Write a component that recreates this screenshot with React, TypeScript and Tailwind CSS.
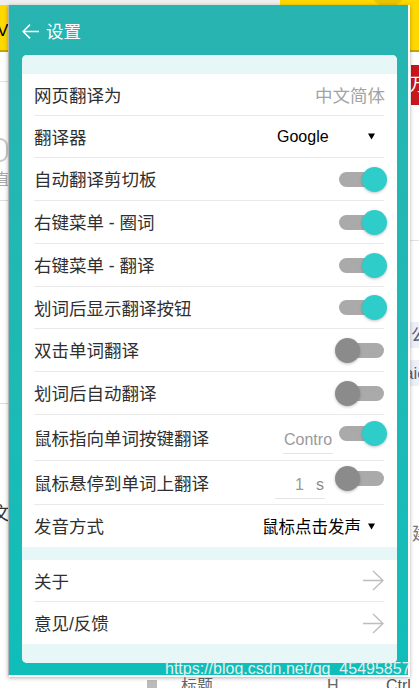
import React from "react";

const FONT = '"Liberation Sans", "Noto Sans CJK SC", sans-serif';

function Toggle({ on, className = "" }: { on: boolean; className?: string }) {
  return (
    <div className={`relative w-[52px] h-[25px] shrink-0 mr-[-3px] ${className}`}>
      <div className="absolute left-[4px] right-[3px] top-[5px] h-[15px] rounded-full bg-[#aaaaaa]" />
      {on ? (
        <div className="absolute right-0 top-0 w-[25px] h-[25px] rounded-full bg-[#2fcdc9] shadow-[0_1px_3px_rgba(0,0,0,0.25)]" />
      ) : (
        <div className="absolute left-0 top-0 w-[25px] h-[25px] rounded-full bg-[#8b8b8b] shadow-[0_1px_3px_rgba(0,0,0,0.25)]" />
      )}
    </div>
  );
}

function Row({
  label,
  h,
  border = true,
  children,
}: {
  label: string;
  h: string;
  border?: boolean;
  children?: React.ReactNode;
}) {
  return (
    <div
      className={`flex items-center justify-between ml-[12px] mr-[13px] ${h} ${
        border ? "border-b border-[#e9e9e9]" : ""
      }`}
    >
      <span className="mt-[4px] text-[17.5px] leading-none text-[#2f2f2f] whitespace-nowrap">{label}</span>
      <div className="flex items-center">{children}</div>
    </div>
  );
}

function Caret() {
  return (
    <svg width="7" height="7" viewBox="0 0 7 7" className="block">
      <polygon points="0,0.5 7,0.5 3.5,6.5" fill="#000" />
    </svg>
  );
}

function RightArrow() {
  return (
    <svg width="21" height="21" viewBox="0 0 21 21" className="block" fill="none">
      <path d="M0 10.5 H20 M10 1 L20 10.5 L10 20" stroke="#bdbdbd" strokeWidth="1.4" />
    </svg>
  );
}

export default function App() {
  return (
    <div
      className="relative w-[419px] h-[688px] overflow-hidden bg-white"
      style={{ fontFamily: FONT }}
    >
      {/* background page */}
      <div className="relative h-[52px] bg-[#ffd800] border-b-2 border-[#c9a400]">
        <div className="absolute left-0 top-0 w-[280px] h-[5px] bg-[#eeeeee]" />
        <div className="absolute left-[372px] top-[-20px] w-[32px] h-[26px] rounded-full bg-[#e8c400]" />
        <span className="absolute left-[-3px] top-[22px] text-[17px] leading-none text-black">V</span>
      </div>
      <div className="absolute left-[411px] top-[65px] w-[10px] h-[40px] bg-[#c8161d] flex items-center">
        <span className="text-[18px] leading-none text-white ml-[-2px]">万</span>
      </div>
      <div className="absolute left-0 top-[81px] w-[8px] h-px bg-[#e2e2e2]" />
      <div className="absolute left-[-8px] top-[138px] w-[16px] h-[24px] rounded-full border-2 border-[#cccccc]" />
      <span className="absolute left-[-6px] top-[172px] text-[16px] leading-none text-[#aaaaaa]">直</span>
      <div className="absolute left-0 top-[200px] w-[8px] h-px bg-[#dddddd]" />
      <div className="absolute left-[410px] top-[240px] w-[9px] h-px bg-[#e2e2e2]" />
      <div className="absolute left-[410px] top-[322px] w-[9px] h-[26px] bg-[#eef0f7] flex items-center">
        <span className="text-[17px] leading-none text-[#555a7a] ml-[1px]">公</span>
      </div>
      <div className="absolute left-[410px] top-[360px] w-[9px] h-[26px] bg-[#eef0f7] flex items-center overflow-hidden">
        <span className="text-[17px] leading-none text-[#555a7a] ml-[-6px]">aic</span>
      </div>
      <div className="absolute left-0 top-[403px] w-[8px] h-px bg-[#dddddd]" />
      <span className="absolute left-[-8px] top-[505px] text-[18px] leading-none text-[#333333]">文</span>
      <span className="absolute left-[412px] top-[525px] text-[18px] leading-none text-[#777777]">建</span>
      <div className="absolute left-[147px] top-[680px] w-[10px] h-[10px] bg-[#bbbbbb]" />
      <span className="absolute left-[181px] top-[678px] text-[16px] leading-none text-[#666666]">标题</span>
      <span className="absolute left-[327px] top-[678px] text-[16px] leading-none text-[#666666]">H</span>
      <span className="absolute left-[386px] top-[678px] text-[16px] leading-none text-[#555555]">Ctrl</span>

      {/* popup */}
      <div className="absolute left-[8px] top-[5px] w-[402px] h-[672px] flex flex-col bg-gradient-to-b from-[#28b4b1] to-[#0fbeb9] border-l border-r-2 border-b-2 border-l-[#b4b4b4] border-r-white border-b-white shadow-[0_1px_4px_rgba(0,0,0,0.3)]">
        <div className="h-[50px] flex items-center pl-[13px] pt-[3px] shrink-0">
          <svg width="17" height="15" viewBox="0 0 17 15" fill="none" className="block">
            <path d="M17 7.5 H1.2 M8 0.6 L1.2 7.5 L8 14.4" stroke="#ffffff" strokeWidth="1.5" />
          </svg>
          <span className="ml-[7px] mt-[2px] text-[17.5px] leading-none text-white">设置</span>
        </div>

        <div className="ml-[13px] mr-[11px] h-[608px] bg-white rounded-[5px] overflow-hidden flex flex-col">
          <div className="h-[19px] bg-[#e7f7f7] shrink-0" />
          <Row label="网页翻译为" h="h-[42px]">
            <span className="mt-[4px] text-[17.5px] leading-none text-[#a3a3a3] mr-[-1px]">中文简体</span>
          </Row>
          <Row label="翻译器" h="h-[42px]">
            <span className="w-[91px] text-[16px] leading-none text-black">Google</span>
            <Caret />
            <span className="w-[9px]" />
          </Row>
          <Row label="自动翻译剪切板" h="h-[43px]">
            <Toggle on />
          </Row>
          <Row label="右键菜单 - 圈词" h="h-[43px]">
            <Toggle on />
          </Row>
          <Row label="右键菜单 - 翻译" h="h-[43px]">
            <Toggle on />
          </Row>
          <Row label="划词后显示翻译按钮" h="h-[42px]">
            <Toggle on />
          </Row>
          <Row label="双击单词翻译" h="h-[43px]">
            <Toggle on={false} />
          </Row>
          <Row label="划词后自动翻译" h="h-[43px]">
            <Toggle on={false} />
          </Row>
          <Row label="鼠标指向单词按键翻译" h="h-[46px]">
            <div className="w-[50px] mr-[2px] mt-[10px] pb-[5px] pl-[1px] border-b border-[#e4e4e4] text-[16px] leading-none text-[#9a9a9a]">
              <div className="w-[48px] overflow-hidden whitespace-nowrap">Control</div>
            </div>
            <Toggle on className="mb-[9px]" />
          </Row>
          <Row label="鼠标悬停到单词上翻译" h="h-[44px]">
            <div className="w-[50px] mr-[10px] mt-[10px] pb-[5px] pr-[1px] flex justify-end border-b border-[#e4e4e4] text-[16px] leading-none text-[#9a9a9a]">
              <span>1</span>
              <span className="ml-[12px] text-[#8a8a8a]">s</span>
            </div>
            <Toggle on={false} className="mb-[9px]" />
          </Row>
          <Row label="发音方式" h="h-[42px]" border={false}>
            <span className="mt-[3px] text-[16.5px] leading-none text-black">鼠标点击发声</span>
            <span className="w-[7px]" />
            <Caret />
            <span className="w-[9px]" />
          </Row>
          <div className="h-[13px] bg-[#e7f7f7] shrink-0" />
          <Row label="关于" h="h-[42px]">
            <RightArrow />
          </Row>
          <Row label="意见/反馈" h="h-[42px]" border={false}>
            <RightArrow />
          </Row>
          <div className="flex-1 bg-[#e7f7f7]" />
        </div>
      </div>

      {/* watermark */}
      <span className="absolute left-[165px] top-[661px] text-[16px] leading-none text-[#e8eeee] whitespace-nowrap">
        https://blog.csdn.net/qq_45495857
      </span>
    </div>
  );
}
